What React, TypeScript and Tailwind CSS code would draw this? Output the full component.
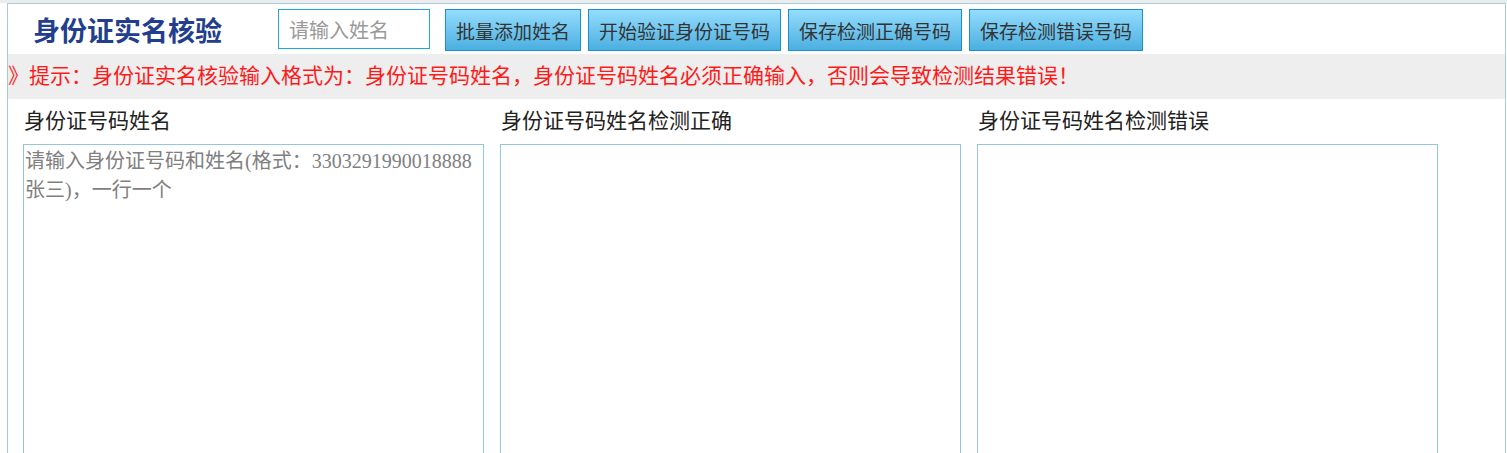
import React from "react";

const serif = { fontFamily: '"Liberation Serif", "Noto Sans CJK SC", serif' };

export default function App() {
  return (
    <div className="min-h-screen bg-white overflow-hidden" style={serif}>
      <div className="h-[3px] bg-[#ececec]" />
      <div className="ml-[7px] w-[1499px] h-[470px] overflow-hidden border border-[#a3cddc] bg-white">
        {/* header */}
        <div className="flex items-center h-[50px]">
          <div
            className="w-[270px] pl-[25px] text-[27px] font-bold text-[#223e8c] leading-none"
            style={{ fontFamily: '"Noto Sans CJK SC", sans-serif' }}
          >
            身份证实名核验
          </div>
          <input
            className="w-[152px] h-[40px] border border-[#1ca8e3] px-[10px] text-[20px] outline-none placeholder:text-[#9a9a9a]"
            style={{ fontFamily: '"Noto Sans CJK SC", sans-serif' }}
            placeholder="请输入姓名"
          />
          <div className="flex gap-[7px] ml-[15px] mt-[2px]">
            <ActionButton label="批量添加姓名" />
            <ActionButton label="开始验证身份证号码" />
            <ActionButton label="保存检测正确号码" />
            <ActionButton label="保存检测错误号码" />
          </div>
        </div>

        {/* tip bar */}
        <div className="h-[45px] bg-[#eeeeee] flex items-center text-[21px] text-[#ff1a1a] leading-none">
          》提示：身份证实名核验输入格式为：身份证号码姓名，身份证号码姓名必须正确输入，否则会导致检测结果错误！
        </div>

        {/* columns */}
        <div className="flex gap-4 pl-[15px]">
          <Column
            title="身份证号码姓名"
            placeholder="请输入身份证号码和姓名(格式：3303291990018888 张三)，一行一个"
          />
          <Column title="身份证号码姓名检测正确" />
          <Column title="身份证号码姓名检测错误" />
        </div>
      </div>
    </div>
  );
}

function ActionButton({ label }: { label: string }) {
  return (
    <button
      className="h-[42px] px-[10px] border border-[#1d8fd0] bg-gradient-to-b from-[#93ddfd] to-[#4aafe0] text-[19px] text-[#333333] leading-none"
      style={{ fontFamily: '"Noto Sans CJK SC", sans-serif' }}
    >
      {label}
    </button>
  );
}

function Column({ title, placeholder }: { title: string; placeholder?: string }) {
  return (
    <div className="w-[461px] flex flex-col">
      <div className="h-[45px] flex items-center pl-px text-[21px] text-[#222222] leading-none">
        {title}
      </div>
      <textarea
        className="w-[461px] h-[400px] border border-[#93c8dc] px-[1px] py-[2px] text-[20px] leading-[29px] resize-none outline-none placeholder:text-[#808080]"
        style={serif}
        placeholder={placeholder}
      />
    </div>
  );
}
